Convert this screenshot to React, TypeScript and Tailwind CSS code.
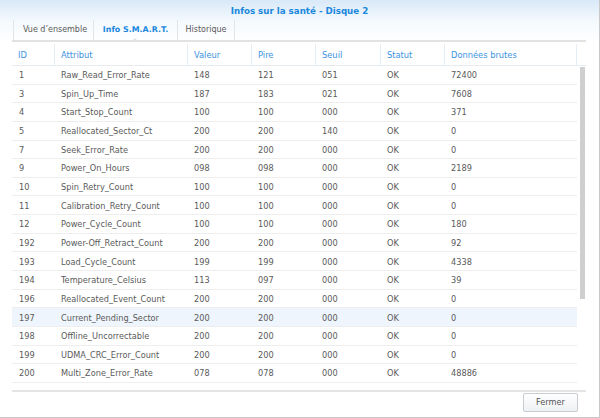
import React from "react";

const rows = [
  ["1", "Raw_Read_Error_Rate", "148", "121", "051", "OK", "72400"],
  ["3", "Spin_Up_Time", "187", "183", "021", "OK", "7608"],
  ["4", "Start_Stop_Count", "100", "100", "000", "OK", "371"],
  ["5", "Reallocated_Sector_Ct", "200", "200", "140", "OK", "0"],
  ["7", "Seek_Error_Rate", "200", "200", "000", "OK", "0"],
  ["9", "Power_On_Hours", "098", "098", "000", "OK", "2189"],
  ["10", "Spin_Retry_Count", "100", "100", "000", "OK", "0"],
  ["11", "Calibration_Retry_Count", "100", "100", "000", "OK", "0"],
  ["12", "Power_Cycle_Count", "100", "100", "000", "OK", "180"],
  ["192", "Power-Off_Retract_Count", "200", "200", "000", "OK", "92"],
  ["193", "Load_Cycle_Count", "199", "199", "000", "OK", "4338"],
  ["194", "Temperature_Celsius", "113", "097", "000", "OK", "39"],
  ["196", "Reallocated_Event_Count", "200", "200", "000", "OK", "0"],
  ["197", "Current_Pending_Sector", "200", "200", "000", "OK", "0"],
  ["198", "Offline_Uncorrectable", "200", "200", "000", "OK", "0"],
  ["199", "UDMA_CRC_Error_Count", "200", "200", "000", "OK", "0"],
  ["200", "Multi_Zone_Error_Rate", "078", "078", "000", "OK", "48886"],
];

const headers = ["ID", "Attribut", "Valeur", "Pire", "Seuil", "Statut", "Données brutes"];
const widths = ["w-[43px]", "w-[133px]", "w-[64px]", "w-[64px]", "w-[65px]", "w-[64px]", "w-[132px]"];

export default function App() {
  return (
    <div className="w-[600px] h-[418px] bg-white border-r border-b border-[#c9c9c9] flex flex-col overflow-hidden text-[#5a5a5a] font-['DejaVu_Sans',Verdana,sans-serif]">
      <div className="bg-gradient-to-b from-[#d9e9f8] via-[#f4f9fd] to-white">
        <div className="h-[20px] flex items-center justify-center pt-[4px] text-[8.7px] font-bold text-[#1a87de]">
          Infos sur la santé - Disque 2
        </div>
        <div className="mx-[12px] w-[574px] h-[22px] flex items-stretch border-b-2 border-[#e2e2e2] text-[8px]">
          <div className="pl-[1px] flex">
            <div className="border-l border-[#e4e4e4] w-[80px] flex items-center justify-center pl-[3px]">Vue d’ensemble</div>
          </div>
          <div className="border-l border-[#e4e4e4] w-[84px] flex items-center justify-center text-[7.9px] font-bold text-[#1a87de] relative">
            Info S.M.A.R.T.
            <span className="absolute bottom-[-2px] left-[37px] w-0 h-0 border-l-[4px] border-r-[4px] border-b-[4px] border-l-transparent border-r-transparent border-b-[#e2e2e2]" />
          </div>
          <div className="border-l border-r border-[#e4e4e4] w-[58px] flex items-center justify-center">Historique</div>
        </div>
      </div>

      <div className="mx-[12px] w-[574px] mt-[2px] flex flex-col">
        <div className="flex h-[22px] border-b border-[#e6ebf0] text-[8.3px] text-[#3c93e0]">
          {headers.map((h, i) => (
            <div key={h} className={`${widths[i]} flex items-center pt-[2px] px-[6px] border-r border-[#e6edf5]`}>
              {h}
            </div>
          ))}
          <div className="flex-1" />
        </div>
        <div className="flex h-[326px] overflow-hidden border-b-2 border-[#e4e4e4]">
          <div className="w-[565px] flex flex-col">
            {rows.map((r) => (
              <div
                key={r[0]}
                className={`flex h-[18.65px] shrink-0 border-b border-[#eeeeee] text-[8.2px] ${r[0] === "197" ? "bg-[#eef5fc]" : ""}`}
              >
                {r.map((c, i) => (
                  <div key={i} className={`${widths[i]} flex items-center pt-[1px] px-[6px] ${i === 0 ? "pl-[7px]" : ""}`}>
                    {c}
                  </div>
                ))}
              </div>
            ))}
          </div>
          <div className="w-[9px] pl-[3px] pt-[1px]">
            <div className="w-[5px] h-[232px] bg-[#cfcfcf]" />
          </div>
        </div>
      </div>

      <div className="flex justify-end pr-[21px] pt-[1px]">
        <button className="w-[55px] h-[19px] border border-[#c9ccd1] rounded-[2px] bg-gradient-to-b from-white to-[#eef1f4] text-[8.2px] text-[#555]">
          Fermer
        </button>
      </div>
    </div>
  );
}
